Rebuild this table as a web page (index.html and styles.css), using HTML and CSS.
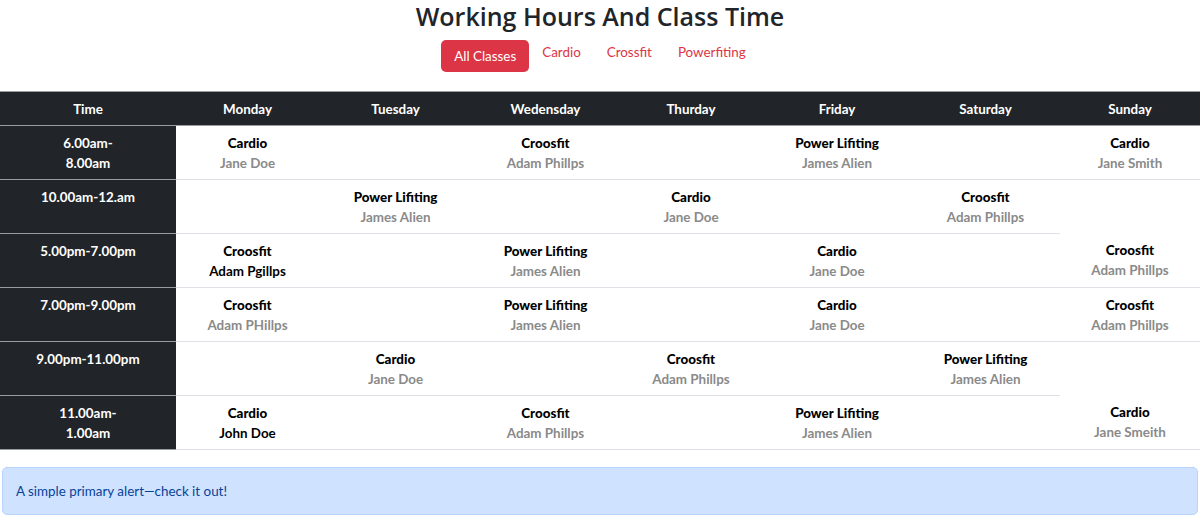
FILE: index.html
```html
<!DOCTYPE html>
<html lang="en">
<head>
<meta charset="utf-8">
<title>Working Hours And Class Time</title>
<link rel="stylesheet" href="styles.css">
</head>
<body>
<header class="head">
  <h2 class="title">Working Hours And Class Time</h2>
  <nav class="tabs">
    <a class="tab active" href="#">All Classes</a>
    <a class="tab" href="#">Cardio</a>
    <a class="tab" href="#">Crossfit</a>
    <a class="tab" href="#">Powerfiting</a>
  </nav>
</header>

<table class="schedule">
  <colgroup>
    <col class="c-time"><col class="c-mon"><col class="c-tue"><col class="c-wed"><col class="c-thu"><col class="c-fri"><col class="c-sat"><col class="c-sun">
  </colgroup>
  <thead>
    <tr>
      <th>Time</th><th>Monday</th><th>Tuesday</th><th>Wedensday</th><th>Thurday</th><th>Friday</th><th>Saturday</th><th>Sunday</th>
    </tr>
  </thead>
  <tbody>
    <tr>
      <th class="time">6.00am-<br>8.00am</th>
      <td><b>Cardio</b><span class="who">Jane Doe</span></td>
      <td></td>
      <td><b>Croosfit</b><span class="who">Adam Phillps</span></td>
      <td></td>
      <td><b>Power Lifiting</b><span class="who">James Alien</span></td>
      <td></td>
      <td><b>Cardio</b><span class="who">Jane Smith</span></td>
    </tr>
    <tr>
      <th class="time">10.00am-12.am</th>
      <td></td>
      <td><b>Power Lifiting</b><span class="who">James Alien</span></td>
      <td></td>
      <td><b>Cardio</b><span class="who">Jane Doe</span></td>
      <td></td>
      <td><b>Croosfit</b><span class="who">Adam Phillps</span></td>
    </tr>
    <tr>
      <th class="time">5.00pm-7.00pm</th>
      <td><b>Croosfit</b><span class="who dark">Adam Pgillps</span></td>
      <td></td>
      <td><b>Power Lifiting</b><span class="who">James Alien</span></td>
      <td></td>
      <td><b>Cardio</b><span class="who">Jane Doe</span></td>
      <td></td>
      <td><b>Croosfit</b><span class="who">Adam Phillps</span></td>
    </tr>
    <tr>
      <th class="time">7.00pm-9.00pm</th>
      <td><b>Croosfit</b><span class="who">Adam PHillps</span></td>
      <td></td>
      <td><b>Power Lifiting</b><span class="who">James Alien</span></td>
      <td></td>
      <td><b>Cardio</b><span class="who">Jane Doe</span></td>
      <td></td>
      <td><b>Croosfit</b><span class="who">Adam Phillps</span></td>
    </tr>
    <tr>
      <th class="time">9.00pm-11.00pm</th>
      <td></td>
      <td><b>Cardio</b><span class="who">Jane Doe</span></td>
      <td></td>
      <td><b>Croosfit</b><span class="who">Adam Phillps</span></td>
      <td></td>
      <td><b>Power Lifiting</b><span class="who">James Alien</span></td>
    </tr>
    <tr>
      <th class="time">11.00am-<br>1.00am</th>
      <td><b>Cardio</b><span class="who dark">John Doe</span></td>
      <td></td>
      <td><b>Croosfit</b><span class="who">Adam Phillps</span></td>
      <td></td>
      <td><b>Power Lifiting</b><span class="who">James Alien</span></td>
      <td></td>
      <td><b>Cardio</b><span class="who">Jane Smeith</span></td>
    </tr>
  </tbody>
</table>

<div class="alert">A simple primary alert—check it out!</div>
</body>
</html>
```

FILE: styles.css
```css
* { box-sizing: border-box; }

body {
  margin: 0;
  font-family: "Segoe UI", Lato, "Open Sans", "Liberation Sans", sans-serif;
  font-size: 13.4px;
  line-height: 20px;
  color: #212529;
  background: #fff;
}

.head {
  display: flex;
  flex-direction: column;
  align-items: center;
}

.title {
  margin: 0;
  font-family: "Segoe UI", "Open Sans", sans-serif;
  font-size: 25px;
  line-height: 32px;
  font-weight: 600;
  color: #212529;
}

.tabs {
  display: flex;
  align-items: flex-start;
  margin-top: 8px;
}

.tab {
  display: block;
  padding: 0 13px;
  color: #dc3545;
  text-decoration: none;
  line-height: 24px;
}

.tab.active {
  background: #dc3545;
  color: #fff;
  border-radius: 5px;
  padding: 6px 13px;
  line-height: 20px;
}

.schedule {
  width: 100%;
  margin-top: 19px;
  border-collapse: collapse;
  table-layout: fixed;
}

.c-time { width: 176px; }
.c-mon { width: 143px; }
.c-tue { width: 153px; }
.c-wed { width: 147px; }
.c-thu { width: 144px; }
.c-fri { width: 148px; }
.c-sat { width: 149px; }
.c-sun { width: 140px; }

.schedule th,
.schedule td {
  padding: 6.5px 4px;
  text-align: center;
  vertical-align: top;
  border-bottom: 1px solid #dee2e6;
  font-weight: 700;
}

.schedule thead th {
  background: #212529;
  color: #fff;
  border-top: 1px solid #9a9c9e;
  border-bottom: 1px solid #9a9c9e;
}

.schedule .time {
  background: #212529;
  color: #fff;
  border-bottom: 1px solid #9a9c9e;
}

.schedule td b {
  display: block;
  color: #000;
}

.who {
  display: block;
  color: #8a8a8a;
}

.who.dark { color: #000; }

.alert {
  margin: 17px 2px 0;
  padding: 13px 13px;
  background: #cfe2ff;
  border: 1px solid #b6d4fe;
  border-radius: 5px;
  color: #084298;
  line-height: 20px;
}
```
